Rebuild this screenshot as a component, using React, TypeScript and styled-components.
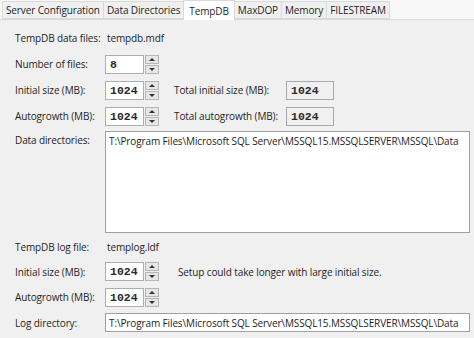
import * as React from "react";
import styled, { createGlobalStyle } from "styled-components";

const GlobalStyle = createGlobalStyle`
  html, body {
    margin: 0;
    padding: 0;
    background: #f0f0f0;
  }
  body {
    font-family: "Open Sans", "Noto Sans", Arial, sans-serif;
    font-size: 10px;
    letter-spacing: -0.12px;
    color: #1e1e1e;
  }
`;

const Window = styled.div`
  width: 474px;
  height: 338px;
  overflow: hidden;
  background: #f0f0f0;
`;

const TabStrip = styled.div`
  height: 20px;
  display: flex;
  align-items: flex-end;
  padding-left: 2px;
  background: #f8f8f8;
  border-bottom: 1px solid #d9d9d9;
  box-sizing: border-box;
`;

const Tab = styled.div<{ $active?: boolean }>`
  height: ${(p) => (p.$active ? "20px" : "18px")};
  margin-bottom: ${(p) => (p.$active ? "-1px" : "0")};
  padding: 0 ${(p) => (p.$active ? "5px" : "3px")};
  display: flex;
  align-items: center;
  box-sizing: border-box;
  border: 1px solid #d9d9d9;
  border-bottom: ${(p) => (p.$active ? "none" : "1px solid #d9d9d9")};
  margin-right: -1px;
  background: ${(p) => (p.$active ? "#ffffff" : "#f0f0f0")};
  white-space: nowrap;
  position: relative;
  z-index: ${(p) => (p.$active ? 1 : 0)};
`;

const Panel = styled.div`
  padding: 5px 0 0 15px;
`;

const Row = styled.div<{ $h?: number }>`
  height: ${(p) => p.$h ?? 26}px;
  display: flex;
  align-items: center;
`;

const Label = styled.div<{ $w?: number }>`
  width: ${(p) => p.$w ?? 90}px;
  flex: none;
  white-space: nowrap;
`;

const Value = styled.div`
  padding-left: 2px;
`;

const Spin = styled.div`
  display: flex;
  height: 19px;
  flex: none;
`;

const SpinField = styled.div`
  width: 39px;
  box-sizing: border-box;
  border: 1px solid #abadb3;
  background: #fff;
  font-family: "Liberation Mono", "Courier New", monospace;
  font-weight: bold;
  font-size: 11.5px;
  letter-spacing: 0;
  color: #2a2a2a;
  padding-left: 4px;
  display: flex;
  align-items: center;
`;

const SpinButtons = styled.div`
  width: 14px;
  margin-left: 1px;
  display: flex;
  flex-direction: column;
  gap: 1px;
`;

const SpinHalf = styled.div`
  flex: 1;
  box-sizing: border-box;
  border: 1px solid #b5b5b5;
  background: #e6e6e6;
  display: flex;
  align-items: center;
  justify-content: center;
`;

const Arrow = styled.div<{ $down?: boolean }>`
  width: 0;
  height: 0;
  border-left: 3px solid transparent;
  border-right: 3px solid transparent;
  ${(p) =>
    p.$down ? "border-top: 3px solid #333;" : "border-bottom: 3px solid #333;"}
`;

const ReadBox = styled.div`
  width: 48px;
  height: 19px;
  box-sizing: border-box;
  border: 1px solid #a8a8a8;
  background: #f0f0f0;
  font-family: "Liberation Mono", "Courier New", monospace;
  font-weight: bold;
  font-size: 11.5px;
  letter-spacing: 0;
  color: #2a2a2a;
  padding-left: 4px;
  display: flex;
  align-items: center;
`;

const SecondLabel = styled(Label)`
  margin-left: 15px;
`;

const Note = styled.div`
  margin-left: 19px;
  white-space: nowrap;
`;

const Area = styled.div`
  width: 365px;
  height: 102px;
  box-sizing: border-box;
  border: 1px solid #a0a0a0;
  background: #fff;
  padding: 2px 3px;
  white-space: nowrap;
`;

const AreaRow = styled.div`
  display: flex;
  margin: 2px 0 1px;
`;

const AreaLabel = styled(Label)`
  padding-top: 2px;
`;

const PathField = styled.div`
  width: 365px;
  height: 19px;
  box-sizing: border-box;
  border: 1px solid #a0a0a0;
  background: #fff;
  padding: 0 3px;
  display: flex;
  align-items: center;
  white-space: nowrap;
`;

const DATA_PATH =
  "T:\\Program Files\\Microsoft SQL Server\\MSSQL15.MSSQLSERVER\\MSSQL\\Data";

const tabs = [
  "Server Configuration",
  "Data Directories",
  "TempDB",
  "MaxDOP",
  "Memory",
  "FILESTREAM",
];

const Spinner = ({ value }: { value: string }) => (
  <Spin>
    <SpinField>{value}</SpinField>
    <SpinButtons>
      <SpinHalf>
        <Arrow />
      </SpinHalf>
      <SpinHalf>
        <Arrow $down />
      </SpinHalf>
    </SpinButtons>
  </Spin>
);

export default function App() {
  return (
    <Window>
      <GlobalStyle />
      <TabStrip>
        {tabs.map((t) => (
          <Tab key={t} $active={t === "TempDB"}>
            {t}
          </Tab>
        ))}
      </TabStrip>
      <Panel>
        <Row>
          <Label>TempDB data files:</Label>
          <Value>tempdb.mdf</Value>
        </Row>
        <Row>
          <Label>Number of files:</Label>
          <Spinner value="8" />
        </Row>
        <Row>
          <Label>Initial size (MB):</Label>
          <Spinner value="1024" />
          <SecondLabel $w={112}>Total initial size (MB):</SecondLabel>
          <ReadBox>1024</ReadBox>
        </Row>
        <Row>
          <Label>Autogrowth (MB):</Label>
          <Spinner value="1024" />
          <SecondLabel $w={112}>Total autogrowth (MB):</SecondLabel>
          <ReadBox>1024</ReadBox>
        </Row>
        <AreaRow>
          <AreaLabel>Data directories:</AreaLabel>
          <Area>{DATA_PATH}</Area>
        </AreaRow>
        <Row $h={25}>
          <Label>TempDB log file:</Label>
          <Value>templog.ldf</Value>
        </Row>
        <Row $h={25}>
          <Label>Initial size (MB):</Label>
          <Spinner value="1024" />
          <Note>Setup could take longer with large initial size.</Note>
        </Row>
        <Row $h={26}>
          <Label>Autogrowth (MB):</Label>
          <Spinner value="1024" />
        </Row>
        <Row $h={25}>
          <Label>Log directory:</Label>
          <PathField>{DATA_PATH}</PathField>
        </Row>
      </Panel>
    </Window>
  );
}
